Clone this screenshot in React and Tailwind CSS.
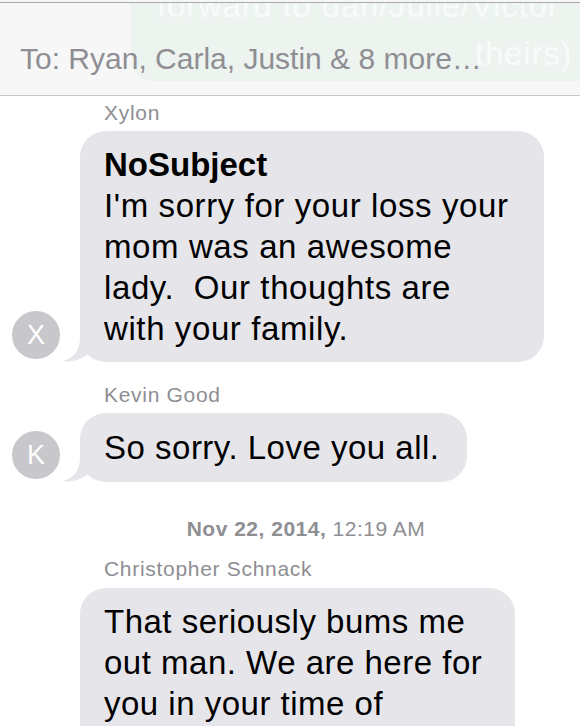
import React from 'react';

const Tail = () => (
  <svg
    className="absolute left-[-17px] bottom-0"
    width="26"
    height="24"
    viewBox="0 0 26 24"
  >
    <path d="M17 0 C17 11 12 19 0 23.5 C9 24 18 22 26 15 L26 0 Z" fill="#e5e5ea" />
  </svg>
);

const Avatar = ({ letter }) => (
  <div className="w-12 h-12 rounded-full bg-[#c7c7cc] flex items-center justify-center text-white text-[27px] font-light mb-[3px] shrink-0">
    {letter}
  </div>
);

const Name = ({ children }) => (
  <div className="pl-[104px] text-[21px] leading-[24px] tracking-[0.7px] text-[#8e8e93]">{children}</div>
);

const App = () => {
  return (
    <div className="w-[580px] h-[726px] overflow-hidden bg-white font-['Liberation_Sans',Arial,sans-serif]">
      {/* Header */}
      <div className="pt-[2px] bg-[#f7f7f7]">
        <div className="relative h-[94px] border-t border-b border-t-[#a9a9a9] border-b-[#c8c8c8] overflow-hidden">
          {/* ghost notification banner */}
          <div className="absolute left-[131px] top-[-30px] right-[-30px] h-[108px] rounded-[22px] bg-[#edf4f0] text-white/70 text-[33px] leading-[44px] tracking-[0.8px] pl-[26px] pt-[11px] whitespace-nowrap">
            <div>forward to dan/Julie/Victor</div>
            <div className="pl-[318px] pt-[4px]">theirs)</div>
          </div>
          <div className="relative pl-[20px] pt-[38px] text-[30px] leading-[36px] text-[#8e8e93] whitespace-nowrap">
            To: Ryan, Carla, Justin &amp; 8 more…
          </div>
        </div>
      </div>

      {/* Messages */}
      <div className="pt-[5px]">
        <Name>Xylon</Name>
        <div className="flex items-end pl-[12px] gap-[20px] mt-[6px]">
          <Avatar letter="X" />
          <div className="relative w-[464px] rounded-[26px] bg-[#e5e5ea] pl-[24px] py-[13px] text-[33px] leading-[41px] tracking-[0.6px] text-black whitespace-nowrap">
            <Tail />
            <div className="font-bold tracking-normal">NoSubject</div>
            <div>I'm sorry for your loss your</div>
            <div>mom was an awesome</div>
            <div>lady.&nbsp; Our thoughts are</div>
            <div>with your family.</div>
          </div>
        </div>

        <div className="mt-[21px]">
          <Name>Kevin Good</Name>
        </div>
        <div className="flex items-end pl-[12px] gap-[20px] mt-[6px]">
          <Avatar letter="K" />
          <div className="relative rounded-[26px] bg-[#e5e5ea] pl-[24px] pr-[27px] py-[14px] text-[33px] leading-[41px] tracking-[0.5px] text-black whitespace-nowrap">
            <Tail />
            So sorry. Love you all.
          </div>
        </div>

        <div className="mt-[35px] pl-[32px] text-center text-[21px] leading-[24px] tracking-[0.5px] text-[#8e8e93]">
          <span className="font-bold">Nov 22, 2014,</span> 12:19 AM
        </div>

        <div className="mt-[16px]">
          <Name>Christopher Schnack</Name>
        </div>
        <div className="pl-[80px] mt-[7px]">
          <div className="relative w-[435px] rounded-[26px] bg-[#e5e5ea] pl-[24px] py-[13px] text-[33px] leading-[41px] tracking-[0.5px] text-black whitespace-nowrap">
            <div>That seriously bums me</div>
            <div>out man. We are here for</div>
            <div>you in your time of</div>
            <div>need.</div>
          </div>
        </div>
      </div>
    </div>
  );
};

export default App;
